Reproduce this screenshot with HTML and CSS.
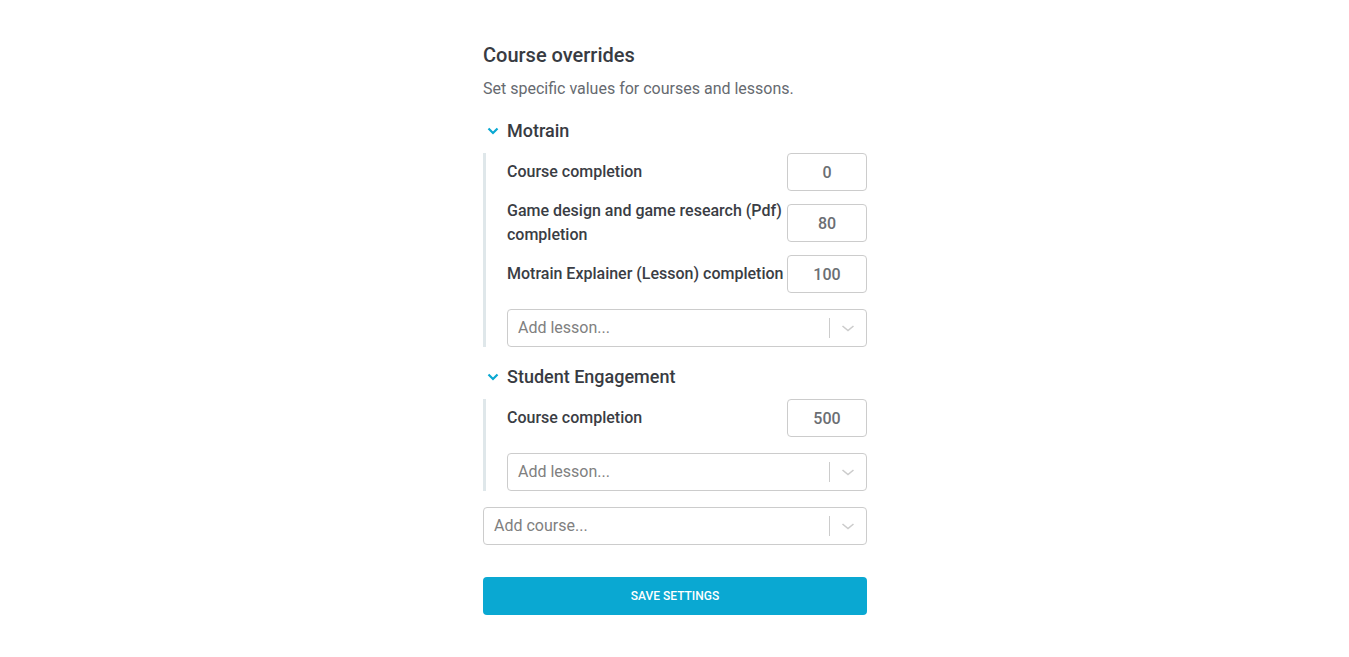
FILE: index.html
```html
<!DOCTYPE html>
<html>
<head>
<meta charset="utf-8">
<link rel="stylesheet" href="styles.css">
</head>
<body>
<main class="panel">
  <h2 class="title">Course overrides</h2>
  <p class="subtitle">Set specific values for courses and lessons.</p>

  <section class="course">
    <h3 class="course-head">
      <svg class="caret" width="12" height="8" viewBox="0 0 12 8"><path d="M1.5 1.5 L6 6 L10.5 1.5" fill="none" stroke="#0aa8d2" stroke-width="2.2"/></svg>
      <span>Motrain</span>
    </h3>
    <div class="course-body">
      <div class="rows">
        <div class="row"><label class="label">Course completion</label><input class="num" type="text" value="0"></div>
        <div class="row"><label class="label">Game design and game research (Pdf) completion</label><input class="num" type="text" value="80"></div>
        <div class="row"><label class="label">Motrain Explainer (Lesson) completion</label><input class="num" type="text" value="100"></div>
      </div>
      <div class="select">
        <span class="placeholder">Add lesson...</span>
        <span class="sep"></span>
        <span class="ind"><svg width="20" height="20" viewBox="0 0 20 20"><path d="M4.5 8 L10 12.5 L15.5 8" fill="none" stroke="#cccccc" stroke-width="1.6"/></svg></span>
      </div>
    </div>
  </section>

  <section class="course">
    <h3 class="course-head">
      <svg class="caret" width="12" height="8" viewBox="0 0 12 8"><path d="M1.5 1.5 L6 6 L10.5 1.5" fill="none" stroke="#0aa8d2" stroke-width="2.2"/></svg>
      <span>Student Engagement</span>
    </h3>
    <div class="course-body">
      <div class="rows">
        <div class="row"><label class="label">Course completion</label><input class="num" type="text" value="500"></div>
      </div>
      <div class="select">
        <span class="placeholder">Add lesson...</span>
        <span class="sep"></span>
        <span class="ind"><svg width="20" height="20" viewBox="0 0 20 20"><path d="M4.5 8 L10 12.5 L15.5 8" fill="none" stroke="#cccccc" stroke-width="1.6"/></svg></span>
      </div>
    </div>
  </section>

  <div class="select course-select">
    <span class="placeholder">Add course...</span>
    <span class="sep"></span>
    <span class="ind"><svg width="20" height="20" viewBox="0 0 20 20"><path d="M4.5 8 L10 12.5 L15.5 8" fill="none" stroke="#cccccc" stroke-width="1.6"/></svg></span>
  </div>

  <button class="save">SAVE SETTINGS</button>
</main>
</body>
</html>
```

FILE: styles.css
```css
* { box-sizing: border-box; }
html, body { margin: 0; padding: 0; background: #fff; }
body { font-family: Roboto, "Noto Sans", sans-serif; color: #3a3d44; }

.panel {
  width: 384px;
  padding-top: 41px;
  margin-left: 483px;
}

.title {
  margin: 0;
  font-size: 20px;
  line-height: 28px;
  font-weight: 500;
  color: #383b42;
}

.subtitle {
  margin: 8px 0 0;
  font-size: 16px;
  line-height: 24px;
  color: #666a70;
}

.course { margin-top: 17px; }
.course + .course { margin-top: 17px; }

.course-head {
  margin: 0;
  display: flex;
  align-items: center;
  height: 24px;
  font-size: 18px;
  font-weight: 500;
  color: #383b42;
}
.caret { margin-left: 4px; margin-right: 8px; margin-top: 1px; }

.course-body {
  margin-top: 11px;
  border-left: 3px solid #dfe7ea;
  padding-left: 21px;
}

.rows { display: flex; flex-direction: column; gap: 8px; }

.row {
  display: flex;
  align-items: center;
  justify-content: space-between;
  min-height: 38px;
}

.label {
  font-size: 16px;
  line-height: 24px;
  font-weight: 500;
  color: #3a3d44;
  flex: 1;
}

.num {
  width: 80px;
  height: 38px;
  flex: none;
  border: 1px solid #cccccc;
  border-radius: 4px;
  font-family: Roboto, sans-serif;
  font-size: 16px;
  font-weight: 500;
  color: #6b6e73;
  text-align: center;
  padding: 0 6px;
  outline: none;
}

.select {
  margin-top: 16px;
  height: 38px;
  border: 1px solid #cccccc;
  border-radius: 4px;
  display: flex;
  align-items: center;
}
.placeholder {
  flex: 1;
  padding-left: 10px;
  padding-bottom: 2px;
  font-size: 16px;
  color: #808080;
}
.sep {
  width: 1px;
  height: 20px;
  background: #cccccc;
}
.ind {
  width: 36px;
  display: flex;
  justify-content: center;
  align-items: center;
}
.ind svg { display: block; }

.course-select { margin-top: 16px; }

.save {
  display: block;
  width: 100%;
  margin-top: 32px;
  height: 38px;
  border: none;
  border-radius: 4px;
  background: #0aa8d2;
  color: #fff;
  font-family: Roboto, sans-serif;
  font-size: 12px;
  font-weight: 500;
  letter-spacing: 0;
}
```
